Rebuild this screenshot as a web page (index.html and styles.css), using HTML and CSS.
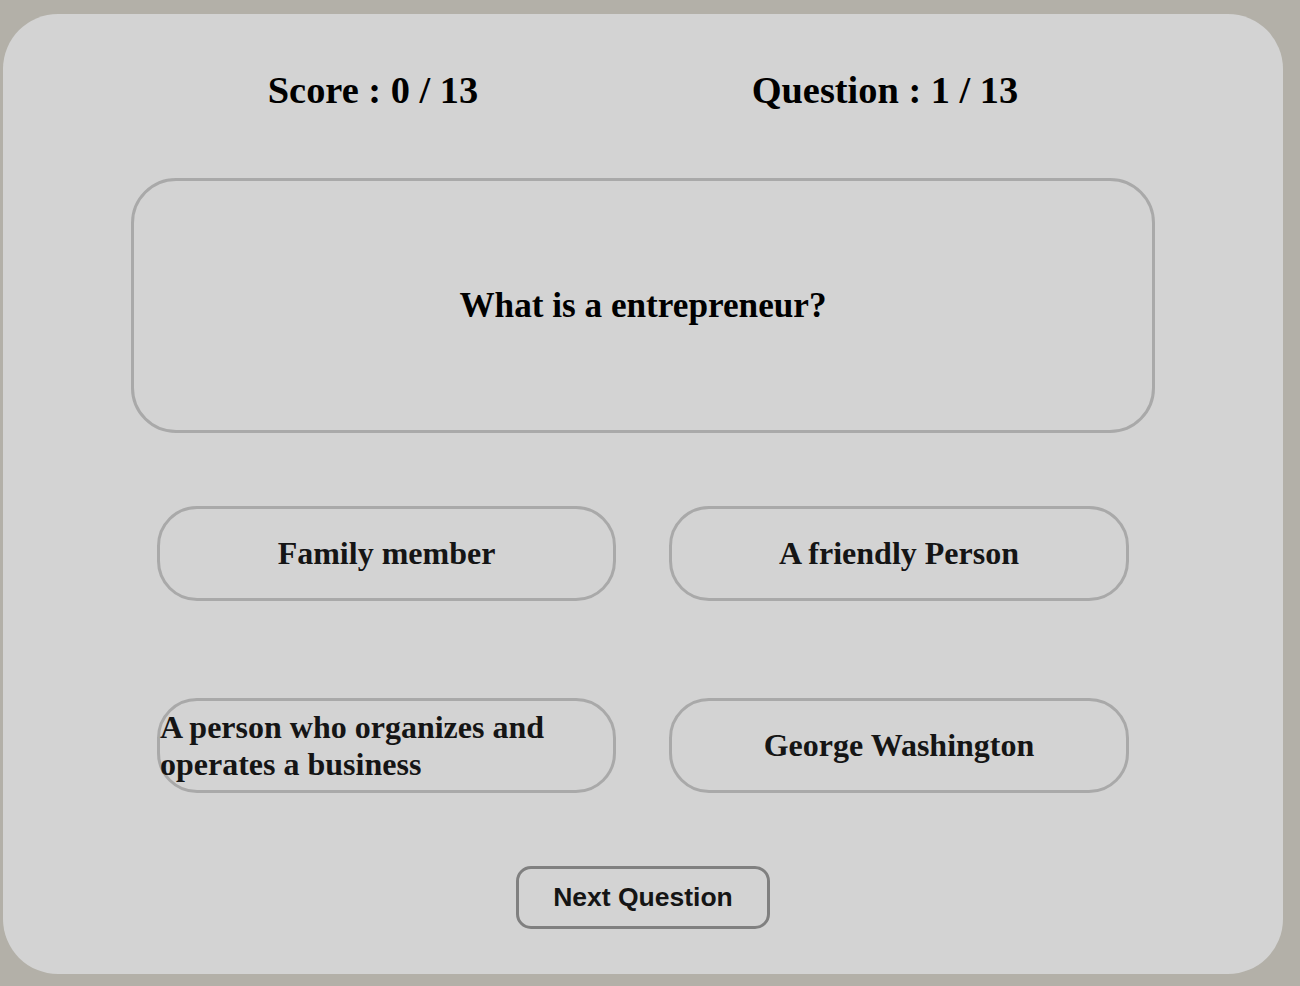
FILE: index.html
```html
<!DOCTYPE html>
<html lang="en">
<head>
<meta charset="utf-8">
<title>Quiz</title>
<link rel="stylesheet" href="styles.css">
</head>
<body>
<main class="card">
  <header class="stats">
    <h2 class="stat">Score : 0 / 13</h2>
    <h2 class="stat">Question : 1 / 13</h2>
  </header>
  <section class="question">
    <h2 class="question-text">What is a entrepreneur?</h2>
  </section>
  <section class="answers">
    <button class="answer">Family member</button>
    <button class="answer">A friendly Person</button>
    <button class="answer answer-left">A person who organizes and operates a business</button>
    <button class="answer">George Washington</button>
  </section>
  <button class="next">Next Question</button>
</main>
</body>
</html>
```
FILE: styles.css
```css
html, body {
  margin: 0;
  padding: 0;
}
body {
  background: #b3b0a8;
  font-family: "Liberation Serif", "Times New Roman", serif;
  padding: 14px 17px 12px 3px;
  box-sizing: border-box;
  height: 986px;
}
.card {
  box-sizing: border-box;
  width: 1280px;
  height: 960px;
  background: #d3d3d3;
  border-radius: 55px;
  padding-top: 54px;
  display: flex;
  flex-direction: column;
  align-items: center;
}
.stats {
  width: 1024px;
  display: flex;
  justify-content: space-around;
}
.stat {
  margin: 0;
  font-size: 38.4px;
  font-weight: bold;
  color: #000;
  line-height: 44px;
}
.question {
  box-sizing: border-box;
  margin-top: 66px;
  width: 1024px;
  height: 255px;
  border: 3px solid #a9a9a9;
  border-radius: 45px;
  display: flex;
  align-items: center;
  justify-content: center;
}
.question-text {
  margin: 0;
  font-size: 35.2px;
  font-weight: bold;
  color: #000;
}
.answers {
  margin-top: 73px;
  display: grid;
  grid-template-columns: 459px 460px;
  grid-template-rows: 95px 95px;
  column-gap: 53px;
  row-gap: 97px;
}
.answer {
  box-sizing: border-box;
  background: transparent;
  border: 3px solid #a9a9a9;
  border-radius: 40px;
  font-family: "Liberation Serif", "Times New Roman", serif;
  font-size: 32px;
  font-weight: bold;
  color: #151515;
  padding: 0 6px;
  text-align: center;
}
.answer-left {
  padding: 0;
  text-align: left;
}
.next {
  box-sizing: border-box;
  margin-top: 73px;
  width: 254px;
  height: 63px;
  background: transparent;
  border: 3px solid #808080;
  border-radius: 15px;
  font-family: "Liberation Sans", Arial, sans-serif;
  font-size: 26.5px;
  font-weight: bold;
  color: #151515;
  padding: 0;
}
```
